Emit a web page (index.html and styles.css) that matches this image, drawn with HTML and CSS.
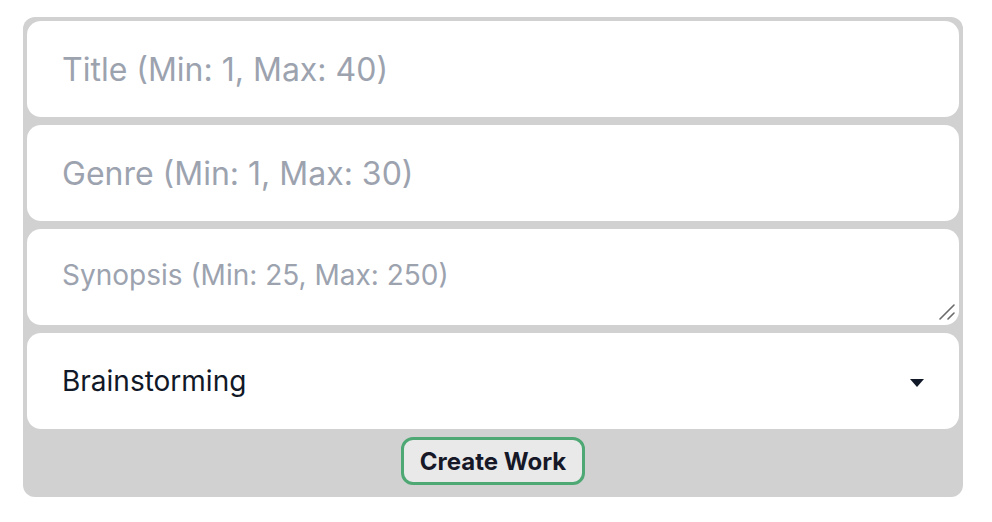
FILE: index.html
```html
<!DOCTYPE html>
<html lang="en">
<head>
<meta charset="utf-8">
<title>Create Work</title>
<link rel="stylesheet" href="styles.css">
</head>
<body>
<form class="work-form">
  <input class="field" type="text" placeholder="Title (Min: 1, Max: 40)">
  <input class="field" type="text" placeholder="Genre (Min: 1, Max: 30)">
  <div class="area-wrap">
    <textarea class="field area" placeholder="Synopsis (Min: 25, Max: 250)"></textarea>
    <svg class="grip" width="16" height="16" viewBox="0 0 16 16" aria-hidden="true">
      <line x1="1" y1="15" x2="15" y2="1" stroke="#6b6b6b" stroke-width="1.6" stroke-linecap="round"/>
      <line x1="9" y1="15" x2="15" y2="9" stroke="#6b6b6b" stroke-width="1.6" stroke-linecap="round"/>
    </svg>
  </div>
  <div class="select-wrap">
    <select class="field select">
      <option>Brainstorming</option>
      <option>Drafting</option>
      <option>Editing</option>
    </select>
    <span class="caret"></span>
  </div>
  <div class="actions">
    <button type="button" class="create">Create Work</button>
  </div>
</form>
</body>
</html>
```

FILE: styles.css
```css
html, body {
  margin: 0;
  padding: 0;
  background: #ffffff;
}

body {
  font-family: Inter, "Noto Sans", sans-serif;
}

.work-form {
  box-sizing: border-box;
  width: 940px;
  margin: 17px 0 0 23px;
  padding: 4px 4px 12px 4px;
  background: #d1d1d1;
  border-radius: 12px;
  display: flex;
  flex-direction: column;
  gap: 8px;
}

.field {
  box-sizing: border-box;
  display: block;
  width: 100%;
  height: 96px;
  margin: 0;
  border: none;
  outline: none;
  background: #ffffff;
  border-radius: 14px;
  padding: 0 35px;
  font-family: Inter, "Noto Sans", sans-serif;
  font-size: 32px;
  color: #111827;
}

.field::placeholder {
  color: #9ca3af;
  opacity: 1;
}

.area-wrap {
  position: relative;
}

.area {
  padding-top: 30px;
  font-size: 28px;
  resize: none;
  line-height: 1.2;
}

.grip {
  position: absolute;
  right: 4px;
  bottom: 5px;
  pointer-events: none;
}

.select-wrap {
  position: relative;
}

.select {
  -webkit-appearance: none;
  appearance: none;
  font-size: 28px;
  color: #111827;
}

.caret {
  position: absolute;
  right: 35px;
  top: 46px;
  width: 0;
  height: 0;
  border-left: 7.5px solid transparent;
  border-right: 7.5px solid transparent;
  border-top: 8px solid #111827;
  pointer-events: none;
}

.actions {
  display: flex;
  justify-content: center;
}

.create {
  box-sizing: border-box;
  height: 48px;
  padding: 0 16px;
  background: #e9e9ea;
  border: 3px solid #4ea874;
  border-radius: 12px;
  font-family: Inter, "Noto Sans", sans-serif;
  font-size: 24px;
  font-weight: 700;
  color: #161827;
  cursor: pointer;
}
```
